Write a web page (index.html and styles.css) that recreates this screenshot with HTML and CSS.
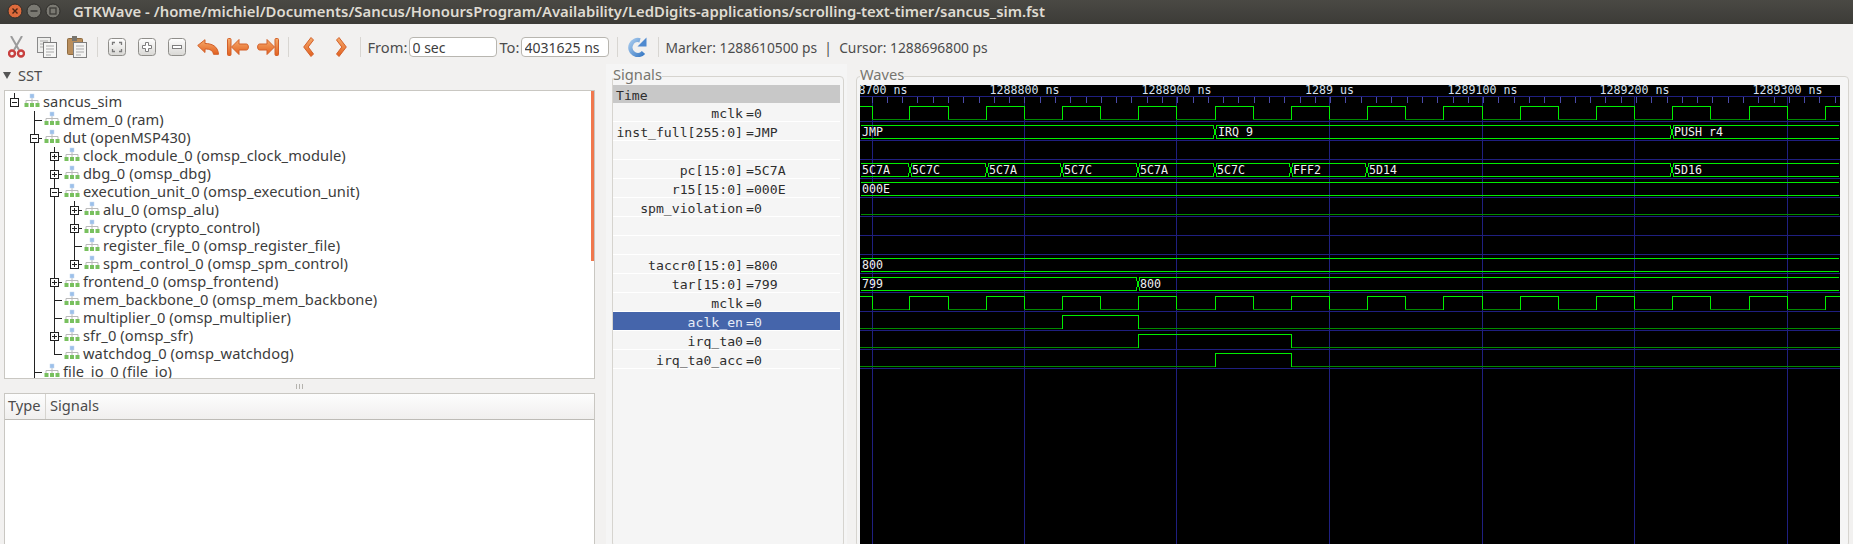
FILE: index.html
```html
<!DOCTYPE html>
<html lang="en">
<head>
  <meta charset="UTF-8" />
  <title>GTKWave - sancus_sim.fst</title>
  <link rel="stylesheet" href="styles.css">
</head>
<body>
  <svg class="defs" width="0" height="0">
    <defs>
      <linearGradient id="orange" x1="0" y1="0" x2="0" y2="1">
        <stop offset="0" stop-color="#f6ab6c"/>
        <stop offset="1" stop-color="#e2601f"/>
      </linearGradient>
      <linearGradient id="btn" x1="0" y1="0" x2="0" y2="1">
        <stop offset="0" stop-color="#ffffff"/>
        <stop offset="1" stop-color="#d8d7d4"/>
      </linearGradient>
      <linearGradient id="blue" x1="0" y1="0" x2="1" y2="1">
        <stop offset="0" stop-color="#a4c8ec"/>
        <stop offset="1" stop-color="#3c7cc6"/>
      </linearGradient>
      <symbol id="mod" viewBox="0 0 16 16">
        <path d="M8 5V8M2 10V7.5H14V10M8 8V10" fill="none" stroke="#b9b9b9"/>
        <rect x="6" y="1" width="4" height="4" fill="#9cc0ea" stroke="#c4d8f0" stroke-width=".5"/>
        <rect x="0.5" y="10" width="4" height="4" fill="#78c05e"/>
        <rect x="6" y="10" width="4" height="4" fill="#78c05e"/>
        <rect x="11.5" y="10" width="4" height="4" fill="#78c05e"/>
      </symbol>
      <symbol id="arrow-bar" viewBox="0 0 22 18">
        <rect x="0.5" y="0.5" width="3.5" height="17" rx="1" fill="url(#orange)" stroke="#d2602a"/>
        <path d="M4.5 9L12 1.5V6H19.5C22 6 22 12 19.5 12H12V16.5Z" fill="url(#orange)" stroke="#d2602a"/>
      </symbol>
      <symbol id="chevron" viewBox="0 0 11 20">
        <path d="M8 .5L.7 10L8 19.5L10.5 17L5.2 10L10.5 3Z" fill="url(#orange)" stroke="#d2602a"/>
      </symbol>
      <g id="clk">
        <path class="hi" d="M860 0H872V13M909 13V0H948V13M986 13V0H1024V13M1062 13V0H1100V13M1138 13V0H1176V13M1215 13V0H1253V13M1291 13V0H1329V13M1367 13V0H1405V13M1443 13V0H1482V13M1520 13V0H1558V13M1596 13V0H1634V13M1672 13V0H1710V13M1749 13V0H1787V13M1825 13V0H1840"/>
        <path class="lo" d="M872 13H909M948 13H986M1024 13H1062M1100 13H1138M1176 13H1215M1253 13H1291M1329 13H1367M1405 13H1443M1482 13H1520M1558 13H1596M1634 13H1672M1710 13H1749M1787 13H1825"/>
      </g>
      <path id="bus-plain" class="hi" d="M861 0H1839M861 13H1839"/>
    </defs>
  </svg>

  <header class="titlebar">
    <svg class="winbtns" width="62" height="20" viewBox="0 0 62 20">
      <circle cx="10" cy="10" r="7" fill="#df6b3c" stroke="#2e2d2a"/>
      <path d="M7.5 7.5L12.5 12.5M12.5 7.5L7.5 12.5" stroke="#4a2415" stroke-width="1.4"/>
      <circle cx="29" cy="10" r="7" fill="#7a7972" stroke="#2e2d2a"/>
      <path d="M25.5 10H32.5" stroke="#3c3b37" stroke-width="1.6"/>
      <circle cx="48" cy="10" r="7" fill="#7a7972" stroke="#2e2d2a"/>
      <rect x="45" y="7" width="6" height="6" fill="none" stroke="#3c3b37" stroke-width="1.3"/>
    </svg>
    <span class="title">GTKWave - /home/michiel/Documents/Sancus/HonoursProgram/Availability/LedDigits-applications/scrolling-text-timer/sancus_sim.fst</span>
  </header>

  <div class="toolbar">
    <span class="tool">
      <svg width="17" height="22" viewBox="0 0 17 22">
        <path d="M3 0L11 14M14 0L6 14" stroke="#9b9b9b" stroke-width="2" fill="none"/>
        <circle cx="4" cy="17.5" r="3" fill="none" stroke="#c8403f" stroke-width="2.4"/>
        <circle cx="13" cy="17.5" r="3" fill="none" stroke="#c8403f" stroke-width="2.4"/>
      </svg>
    </span>
    <span class="tool">
      <svg width="20" height="21" viewBox="0 0 20 21">
        <rect x="0.5" y="0.5" width="13" height="15" fill="#eeeeec" stroke="#8a8a8a"/>
        <path d="M3 4H11M3 7H11M3 10H6" stroke="#aaa"/>
        <rect x="6.5" y="5.5" width="13" height="15" fill="#f6f6f5" stroke="#7c7c7c"/>
        <path d="M9 9H17M9 12H17M9 15H17M9 18H14" stroke="#aaa"/>
      </svg>
    </span>
    <span class="tool">
      <svg width="20" height="22" viewBox="0 0 20 22">
        <rect x="0.5" y="2.5" width="15" height="16" rx="1" fill="#b98e5c" stroke="#8f6c42"/>
        <rect x="5" y="0" width="5" height="5" fill="#77756f"/>
        <rect x="6.5" y="6.5" width="13" height="15" fill="#f4f4f3" stroke="#7f7f7f"/>
        <path d="M9 10H17M9 13H17M9 16H17M9 19H14" stroke="#aaa"/>
      </svg>
    </span>
    <i class="sep"></i>
    <span class="tool">
      <svg width="19" height="19" viewBox="0 0 19 19">
        <rect x="0.5" y="0.5" width="17" height="17" rx="3" fill="url(#btn)" stroke="#8f8e8a"/>
        <path d="M4.5 7V4.5H7M11 4.5H13.5V7M13.5 11V13.5H11M7 13.5H4.5V11" fill="none" stroke="#7a7a7a" stroke-width="1.3"/>
      </svg>
    </span>
    <span class="tool">
      <svg width="19" height="19" viewBox="0 0 19 19">
        <rect x="0.5" y="0.5" width="17" height="17" rx="3" fill="url(#btn)" stroke="#8f8e8a"/>
        <path d="M7.5 4.5H10.5V7.5H13.5V10.5H10.5V13.5H7.5V10.5H4.5V7.5H7.5Z" fill="#fff" stroke="#7e7e7e"/>
      </svg>
    </span>
    <span class="tool">
      <svg width="19" height="19" viewBox="0 0 19 19">
        <rect x="0.5" y="0.5" width="17" height="17" rx="3" fill="url(#btn)" stroke="#8f8e8a"/>
        <rect x="4.5" y="7.5" width="9" height="3" fill="#fff" stroke="#7e7e7e"/>
      </svg>
    </span>
    <span class="tool">
      <svg width="22" height="16" viewBox="0 0 22 16">
        <path d="M.7 6.5L8 .7V4.5C14.5 4.5 21 7 21.5 15.3H16.5C16 11.5 13 10 8 10V13.5Z" fill="url(#orange)" stroke="#d2602a"/>
      </svg>
    </span>
    <span class="tool">
      <svg width="22" height="18"><use href="#arrow-bar"/></svg>
    </span>
    <span class="tool">
      <svg class="flip" width="22" height="18"><use href="#arrow-bar"/></svg>
    </span>
    <i class="sep sep-tight"></i>
    <span class="tool tool-wide">
      <svg width="11" height="20"><use href="#chevron"/></svg>
    </span>
    <span class="tool tool-wide">
      <svg class="flip" width="11" height="20"><use href="#chevron"/></svg>
    </span>
    <i class="sep sep-nav"></i>
    <label class="field-label">From:</label>
    <input class="entry" type="text" value="0 sec">
    <label class="field-label field-to">To:</label>
    <input class="entry" type="text" value="4031625 ns">
    <i class="sep sep-reload"></i>
    <span class="tool-reload">
      <svg width="19" height="20" viewBox="0 0 19 20">
        <path d="M15.5 15.5A7.5 7.5 0 1 1 12 3.3" fill="none" stroke="url(#blue)" stroke-width="4.4"/>
        <path d="M18.5 0.5V9.5H9.5Z" fill="#4f8ad0"/>
      </svg>
    </span>
    <i class="sep sep-reload"></i>
    <span class="status">Marker: 1288610500 ps&nbsp;&nbsp;|&nbsp;&nbsp;Cursor: 1288696800 ps</span>
  </div>

  <main class="panes">
    <section class="left-pane">
      <div class="sst-head"><i class="tri"></i>SST</div>
      <div class="tree">
        <div class="tree-rows">
          <div class="row"><i class="cell up"><b class="exp"></b></i><svg class="ico"><use href="#mod"/></svg><span>sancus_sim</span></div>
          <div class="row"><i class="cell"></i><i class="cell t"></i><svg class="ico"><use href="#mod"/></svg><span>dmem_0 (ram)</span></div>
          <div class="row"><i class="cell"></i><i class="cell t"><b class="exp"></b></i><svg class="ico"><use href="#mod"/></svg><span>dut (openMSP430)</span></div>
          <div class="row"><i class="cell"></i><i class="cell g"></i><i class="cell t"><b class="exp plus"></b></i><svg class="ico"><use href="#mod"/></svg><span>clock_module_0 (omsp_clock_module)</span></div>
          <div class="row"><i class="cell"></i><i class="cell g"></i><i class="cell t"><b class="exp plus"></b></i><svg class="ico"><use href="#mod"/></svg><span>dbg_0 (omsp_dbg)</span></div>
          <div class="row"><i class="cell"></i><i class="cell g"></i><i class="cell t"><b class="exp"></b></i><svg class="ico"><use href="#mod"/></svg><span>execution_unit_0 (omsp_execution_unit)</span></div>
          <div class="row"><i class="cell"></i><i class="cell g"></i><i class="cell g"></i><i class="cell t"><b class="exp plus"></b></i><svg class="ico"><use href="#mod"/></svg><span>alu_0 (omsp_alu)</span></div>
          <div class="row"><i class="cell"></i><i class="cell g"></i><i class="cell g"></i><i class="cell t"><b class="exp plus"></b></i><svg class="ico"><use href="#mod"/></svg><span>crypto (crypto_control)</span></div>
          <div class="row"><i class="cell"></i><i class="cell g"></i><i class="cell g"></i><i class="cell t"></i><svg class="ico"><use href="#mod"/></svg><span>register_file_0 (omsp_register_file)</span></div>
          <div class="row"><i class="cell"></i><i class="cell g"></i><i class="cell g"></i><i class="cell l"><b class="exp plus"></b></i><svg class="ico"><use href="#mod"/></svg><span>spm_control_0 (omsp_spm_control)</span></div>
          <div class="row"><i class="cell"></i><i class="cell g"></i><i class="cell t"><b class="exp plus"></b></i><svg class="ico"><use href="#mod"/></svg><span>frontend_0 (omsp_frontend)</span></div>
          <div class="row"><i class="cell"></i><i class="cell g"></i><i class="cell t"></i><svg class="ico"><use href="#mod"/></svg><span>mem_backbone_0 (omsp_mem_backbone)</span></div>
          <div class="row"><i class="cell"></i><i class="cell g"></i><i class="cell t"></i><svg class="ico"><use href="#mod"/></svg><span>multiplier_0 (omsp_multiplier)</span></div>
          <div class="row"><i class="cell"></i><i class="cell g"></i><i class="cell t"><b class="exp plus"></b></i><svg class="ico"><use href="#mod"/></svg><span>sfr_0 (omsp_sfr)</span></div>
          <div class="row"><i class="cell"></i><i class="cell g"></i><i class="cell l"></i><svg class="ico"><use href="#mod"/></svg><span>watchdog_0 (omsp_watchdog)</span></div>
          <div class="row"><i class="cell"></i><i class="cell t"></i><svg class="ico"><use href="#mod"/></svg><span>file_io_0 (file_io)</span></div>
        </div>
        <div class="scroll-mark"></div>
      </div>
      <div class="handle"><i></i></div>
      <div class="sig-table">
        <div class="sig-head">
          <span class="col-type">Type</span>
          <span class="col-sig">Signals</span>
        </div>
      </div>
    </section>

    <section class="signals-pane">
      <fieldset class="frame">
        <legend>Signals</legend>
        <div class="sig-list">
          <div class="sig sig-time">Time</div>
          <div class="sig"><span class="name">mclk</span><span class="val">=0</span></div>
          <div class="sig"><span class="name">inst_full[255:0]</span><span class="val">=JMP</span></div>
          <div class="sig"></div>
          <div class="sig"><span class="name">pc[15:0]</span><span class="val">=5C7A</span></div>
          <div class="sig"><span class="name">r15[15:0]</span><span class="val">=000E</span></div>
          <div class="sig"><span class="name">spm_violation</span><span class="val">=0</span></div>
          <div class="sig"></div>
          <div class="sig"></div>
          <div class="sig"><span class="name">taccr0[15:0]</span><span class="val">=800</span></div>
          <div class="sig"><span class="name">tar[15:0]</span><span class="val">=799</span></div>
          <div class="sig"><span class="name">mclk</span><span class="val">=0</span></div>
          <div class="sig sig-sel"><span class="name">aclk_en</span><span class="val">=0</span></div>
          <div class="sig"><span class="name">irq_ta0</span><span class="val">=0</span></div>
          <div class="sig"><span class="name">irq_ta0_acc</span><span class="val">=0</span></div>
        </div>
      </fieldset>
    </section>

    <section class="waves-pane">
      <fieldset class="frame">
        <legend>Waves</legend>
        <svg class="waves" width="980" height="459" viewBox="860 85 980 459">
          <rect x="860" y="85" width="980" height="459" fill="#000"/>

          <path class="grid" d="M860 96.5H1840M860 121.5H1840M860 140.5H1840M860 159.5H1840M860 178.5H1840M860 197.5H1840M860 216.5H1840M860 235.5H1840M860 254.5H1840M860 273.5H1840M860 292.5H1840M860 311.5H1840M860 330.5H1840M860 349.5H1840M860 368.5H1840"/>
          <path class="grid" d="M872.5 96V544M1024.5 96V544M1176.5 96V544M1329.5 96V544M1482.5 96V544M1634.5 96V544M1787.5 96V544"/>
          <path class="ticks" d="M871.5 100H1840"/>

          <g class="time">
            <text x="872.5" y="94">1288700 ns</text>
            <text x="1024.5" y="94">1288800 ns</text>
            <text x="1176.5" y="94">1288900 ns</text>
            <text x="1329.5" y="94">1289 us</text>
            <text x="1482.5" y="94">1289100 ns</text>
            <text x="1634.5" y="94">1289200 ns</text>
            <text x="1787.5" y="94">1289300 ns</text>
          </g>

          <use href="#clk" x="0" y="106.5"/>
          <use href="#clk" x="0" y="296.5"/>

          <!-- inst_full -->
          <g transform="translate(0 125.5)">
            <path class="hi" d="M861 0H1213L1215 6.5L1213 13H861M1217 0L1215 6.5L1217 13M1217 0H1670L1672 6.5L1670 13H1217M1674 0L1672 6.5L1674 13M1674 0H1839M1674 13H1839"/>
          </g>
          <!-- pc -->
          <g transform="translate(0 163.5)">
            <path class="hi" d="M861 0H908L910 6.5L908 13H861M912 0L910 6.5L912 13M912 0H985L987 6.5L985 13H912M989 0L987 6.5L989 13M989 0H1060L1062 6.5L1060 13H989M1064 0L1062 6.5L1064 13M1064 0H1136L1138 6.5L1136 13H1064M1140 0L1138 6.5L1140 13M1140 0H1213L1215 6.5L1213 13H1140M1217 0L1215 6.5L1217 13M1217 0H1289L1291 6.5L1289 13H1217M1293 0L1291 6.5L1293 13M1293 0H1365L1367 6.5L1365 13H1293M1369 0L1367 6.5L1369 13M1369 0H1670L1672 6.5L1670 13H1369M1674 0L1672 6.5L1674 13M1674 0H1839M1674 13H1839"/>
          </g>
          <use href="#bus-plain" x="0" y="182.5"/>
          <path class="lo" d="M861 214.5H1839"/>
          <use href="#bus-plain" x="0" y="258.5"/>
          <!-- tar -->
          <g transform="translate(0 277.5)">
            <path class="hi" d="M861 0H1136L1138 6.5L1136 13H861M1140 0L1138 6.5L1140 13M1140 0H1839M1140 13H1839"/>
          </g>
          <!-- aclk_en, irq_ta0, irq_ta0_acc -->
          <path class="lo" d="M860 328.5H1062M1138 328.5H1840M860 347.5H1138M1291 347.5H1840M860 366.5H1215M1291 366.5H1840"/>
          <path class="hi" d="M1062.5 328.5V315.5H1138.5V328.5M1138.5 347.5V334.5H1291.5V347.5M1215.5 366.5V353.5H1291.5V366.5"/>

          <g class="val-text">
            <text x="862" y="136">JMP</text>
            <text x="1218" y="136">IRQ 9</text>
            <text x="1674" y="136">PUSH r4</text>
            <text x="862" y="174">5C7A</text>
            <text x="912" y="174">5C7C</text>
            <text x="989" y="174">5C7A</text>
            <text x="1064" y="174">5C7C</text>
            <text x="1140" y="174">5C7A</text>
            <text x="1217" y="174">5C7C</text>
            <text x="1293" y="174">FFF2</text>
            <text x="1369" y="174">5D14</text>
            <text x="1674" y="174">5D16</text>
            <text x="862" y="193">000E</text>
            <text x="862" y="269">800</text>
            <text x="862" y="288">799</text>
            <text x="1140" y="288">800</text>
          </g>
        </svg>
      </fieldset>
    </section>
  </main>
</body>
</html>
```

FILE: styles.css
```css
* {
  box-sizing: border-box;
}
html, body {
  margin: 0;
  height: 100%;
  overflow: hidden;
}
body {
  width: 1853px;
  height: 544px;
  background: #f2f1f0;
  color: #3c3c3c;
  font-family: "Noto Sans", sans-serif;
  font-size: 13.33px;
}
.defs {
  position: absolute;
}

/* title bar */
.titlebar {
  display: flex;
  align-items: center;
  height: 24px;
  padding-bottom: 2px;
  background: linear-gradient(#4a4944, #3c3b37);
  color: #dfdbd2;
}
.winbtns {
  margin-left: 5px;
  flex: none;
}
.title {
  margin-left: 6px;
  font-size: 14.87px;
  font-weight: 600;
  white-space: nowrap;
}

/* toolbar */
.toolbar {
  display: flex;
  align-items: center;
  height: 40px;
  padding: 6px 0 0 1.5px;
  font-size: 14.67px;
  color: #4c4c4c;
}
.tool {
  display: flex;
  align-items: center;
  justify-content: center;
  width: 30px;
  height: 24px;
}
.tool-wide {
  width: 33px;
}
.flip {
  transform: scaleX(-1);
}
.sep {
  flex: none;
  width: 1px;
  height: 20px;
  margin: 0 5px;
  background: #d8d6d2;
}
.sep-tight {
  margin-right: 3px;
}
.sep-nav {
  margin: 0 7px 0 2px;
}
.sep-reload {
  margin: 0 7px 0 8px;
}
.tool-reload {
  display: flex;
  width: 19px;
  margin: 0 3px;
}
.field-label {
  flex: none;
  width: 41px;
}
.field-to {
  width: 21px;
  margin-left: 3px;
}
.entry {
  flex: none;
  width: 88px;
  height: 20px;
  padding: 0 3px;
  border: 1px solid #b8b6b0;
  border-radius: 4px;
  background: #fff;
  color: #3c3c3c;
  font: inherit;
  font-size: 14px;
}
.status {
  font-size: 13.8px;
  white-space: nowrap;
}

/* panes */
.panes {
  display: flex;
  height: 480px;
}
.left-pane {
  flex: none;
  width: 606px;
}
.sst-head {
  display: flex;
  align-items: center;
  height: 26px;
  padding: 0 0 4px 3px;
  font-size: 14.67px;
  color: #4c4c4c;
}
.tri {
  width: 0;
  height: 0;
  margin-right: 7px;
  border-left: 4px solid transparent;
  border-right: 4px solid transparent;
  border-top: 7px solid #555;
}

/* hierarchy tree */
.tree {
  position: relative;
  width: 591px;
  height: 289px;
  margin-left: 4px;
  padding-top: 2px;
  border: 1px solid #c9c7c2;
  background: #fff;
  overflow: hidden;
}
.tree-rows {
  margin-left: -1px;
}
.row {
  display: flex;
  height: 18px;
  font-size: 14.67px;
  white-space: nowrap;
}
.row span {
  margin-left: 3px;
  line-height: 16px;
  letter-spacing: 0.08px;
}
.ico {
  flex: none;
  width: 16px;
  height: 16px;
}
.cell {
  position: relative;
  flex: none;
  width: 20px;
  height: 18px;
}
.g::before, .t::before, .l::before, .up::before {
  content: "";
  position: absolute;
  left: 10px;
  top: 0;
  width: 1px;
  height: 18px;
  background: #222;
}
.l::before, .up::before {
  height: 9px;
}
.t::after, .l::after {
  content: "";
  position: absolute;
  left: 10px;
  top: 9px;
  width: 8px;
  height: 1px;
  background: #222;
}
.exp {
  position: absolute;
  z-index: 1;
  left: 6px;
  top: 5px;
  width: 9px;
  height: 9px;
  border: 1px solid #222;
  background: #fff;
}
.exp::before {
  content: "";
  position: absolute;
  left: 1px;
  top: 3px;
  width: 5px;
  height: 1px;
  background: #222;
}
.plus::after {
  content: "";
  position: absolute;
  left: 3px;
  top: 1px;
  width: 1px;
  height: 5px;
  background: #222;
}
.scroll-mark {
  position: absolute;
  right: 0;
  top: 0;
  width: 3px;
  height: 170px;
  background: #f0784e;
}

/* splitter and the signal table under it */
.handle {
  display: flex;
  align-items: center;
  justify-content: center;
  width: 598px;
  height: 14px;
}
.handle i {
  width: 7px;
  height: 5px;
  background: repeating-linear-gradient(90deg, #b5b3ae 0 1px, transparent 1px 3px);
}
.sig-table {
  width: 591px;
  height: 152px;
  margin-left: 4px;
  border: 1px solid #c9c7c2;
  background: #fff;
}
.sig-head {
  display: flex;
  height: 26px;
  border-bottom: 1px solid #bdbbb6;
  background: linear-gradient(#fdfdfd, #f0efee);
  font-size: 14.67px;
  line-height: 22px;
  color: #4c4c4c;
}
.col-type {
  width: 41px;
  padding-left: 3px;
  border-right: 1px solid #d6d4cf;
}
.col-sig {
  padding-left: 4px;
}

/* framed panes */
.frame {
  min-width: 0;
  margin: 0;
  padding: 0;
  border: 1px solid #d6d4cf;
  border-radius: 4px;
}
.frame legend {
  height: 18px;
  padding: 0;
  line-height: 14px;
  font-size: 14.67px;
  color: #77766f;
}
.signals-pane {
  flex: none;
  width: 241px;
  height: 480px;
  padding: 3px 0 0 6px;
  background: #f5f5f5;
}
.signals-pane .frame {
  width: 232px;
  height: 480px;
  padding-right: 3px;
}
.sig {
  display: flex;
  height: 19px;
  padding-top: 1px;
  border-bottom: 1px solid #fff;
  font-family: "DejaVu Sans Mono", monospace;
  font-size: 13.15px;
  line-height: 19px;
  color: #2e2e2e;
  white-space: pre;
}
.sig-time {
  height: 18px;
  padding-left: 3px;
  border-bottom: 0;
  background: #c8c8c8;
}
.sig-sel {
  background: #4565ab;
  color: #e6ecf7;
}
.name {
  width: 130px;
  text-align: right;
}
.val {
  margin-left: 3px;
}
.waves-pane {
  flex: none;
  padding: 3px 0 0 9px;
}
.waves-pane .frame {
  width: 993px;
  height: 480px;
  padding: 0 8px 0 3px;
  background: #f5f5f5;
}
.waves {
  display: block;
}

/* wave canvas */
.waves path, .waves use {
  fill: none;
  shape-rendering: crispEdges;
}
.grid {
  stroke: #1f1f80;
}
.ticks {
  stroke: #4a4aa8;
  stroke-width: 6;
  stroke-dasharray: 1 14.29;
}
.hi {
  stroke: #00ee00;
}
.lo {
  stroke: #008a00;
}
.waves text {
  font-family: "DejaVu Sans Mono", monospace;
  font-size: 11.63px;
  fill: #f0f0f0;
}
.time text {
  text-anchor: middle;
  fill: #d8e0f0;
}
```
